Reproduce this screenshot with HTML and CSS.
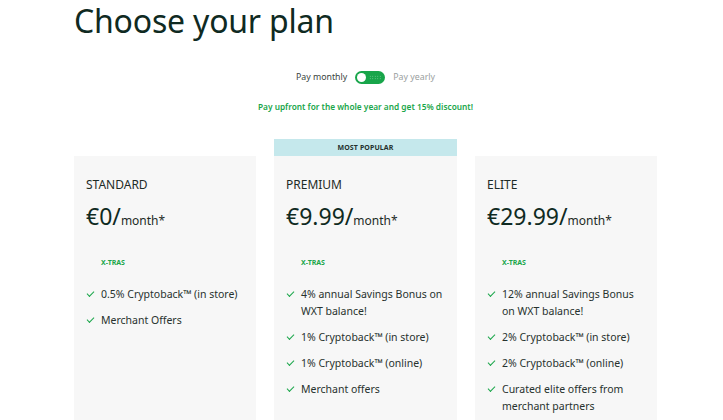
FILE: index.html
```html
<!DOCTYPE html>
<html>
<head>
<meta charset="utf-8">
<link rel="stylesheet" href="styles.css">
</head>
<body>
<div class="page">
  <h1 class="title">Choose your plan</h1>
  <div class="toggle-row">
    <span class="pay active">Pay monthly</span>
    <span class="switch"><span class="knob"></span><span class="dots"></span></span>
    <span class="pay">Pay yearly</span>
  </div>
  <p class="discount">Pay upfront for the whole year and get 15% discount!</p>
  <div class="plans">
    <div class="plan">
      <div class="banner empty"></div>
      <div class="card">
        <div class="name">STANDARD</div>
        <div class="price"><span class="amount">€0/</span><span class="per">month*</span></div>
        <div class="xtras">X-TRAS</div>
        <ul class="list">
          <li>0.5% Cryptoback™ (in store)</li>
          <li>Merchant Offers</li>
        </ul>
      </div>
    </div>
    <div class="plan">
      <div class="banner">MOST POPULAR</div>
      <div class="card">
        <div class="name">PREMIUM</div>
        <div class="price"><span class="amount">€9.99/</span><span class="per">month*</span></div>
        <div class="xtras">X-TRAS</div>
        <ul class="list">
          <li>4% annual Savings Bonus on WXT balance!</li>
          <li>1% Cryptoback™ (in store)</li>
          <li>1% Cryptoback™ (online)</li>
          <li>Merchant offers</li>
        </ul>
      </div>
    </div>
    <div class="plan">
      <div class="banner empty"></div>
      <div class="card">
        <div class="name">ELITE</div>
        <div class="price"><span class="amount">€29.99/</span><span class="per">month*</span></div>
        <div class="xtras">X-TRAS</div>
        <ul class="list">
          <li>12% annual Savings Bonus on WXT balance!</li>
          <li>2% Cryptoback™ (in store)</li>
          <li>2% Cryptoback™ (online)</li>
          <li>Curated elite offers from merchant partners</li>
        </ul>
      </div>
    </div>
  </div>
</div>
</body>
</html>
```
FILE: styles.css
```css
* { box-sizing: border-box; }
html, body { margin: 0; padding: 0; background: #fff; }
body { font-family: "Noto Sans", "Open Sans", sans-serif; color: #1d2b26; overflow: hidden; }
.page { width: 723px; height: 420px; padding-left: 74px; overflow: hidden; }
.title {
  margin: 0;
  font-size: 32px;
  font-weight: 400;
  line-height: 42px;
  color: #0f2a22;
  letter-spacing: -0.2px;
}
.toggle-row {
  margin-top: 28px;
  width: 583px;
  display: flex;
  justify-content: center;
  align-items: center;
  gap: 8px;
  height: 14px;
}
.pay { font-size: 8.8px; color: #9aa09e; }
.pay.active { color: #3a4541; }
.switch {
  position: relative;
  width: 30px; height: 13px;
  border-radius: 7px;
  background: #18a54a;
  display: inline-block;
}
.knob {
  position: absolute; left: 2px; top: 2px;
  width: 9px; height: 9px; border-radius: 50%;
  background: #fff;
}
.dots {
  position: absolute; left: 14px; top: 4px;
  width: 12px; height: 5px;
  background-image: radial-gradient(circle, rgba(255,255,255,0.45) 0.6px, transparent 0.8px);
  background-size: 2.5px 2.5px;
}
.discount {
  margin: 17px 0 0;
  width: 583px;
  text-align: center;
  font-size: 8.3px;
  font-weight: 600;
  color: #1aa64a;
  line-height: 12px;
}
.plans {
  margin-top: 26px;
  width: 583px;
  display: grid;
  grid-template-columns: 182px 183px 182px;
  column-gap: 18px;
}
.banner {
  height: 17px;
  background: #c5e8ec;
  font-size: 7px;
  font-weight: 700;
  text-align: center;
  line-height: 17px;
  color: #24302c;
  letter-spacing: 0.1px;
}
.banner.empty { background: transparent; }
.card {
  background: #f7f7f7;
  height: 300px;
  padding: 21px 12px 0;
}
.name { font-size: 12px; color: #1d2b26; line-height: 16px; }
.price { margin-top: 9px; line-height: 28px; }
.amount { font-size: 23px; color: #0f2a22; }
.per { font-size: 12px; color: #1d2b26; }
.xtras {
  margin-top: 23px;
  padding-left: 15px;
  font-size: 7px;
  font-weight: 700;
  color: #1aa64a;
  line-height: 10px;
}
.list { list-style: none; margin: 18px 0 0; padding: 0; }
.list li {
  position: relative;
  padding-left: 15px;
  font-size: 10.5px;
  line-height: 17px;
  color: #27322e;
  margin-bottom: 9px;
}
.list li::before {
  content: "";
  position: absolute;
  left: 1px; top: 5px;
  width: 6px; height: 3px;
  border-left: 1.5px solid #1aa64a;
  border-bottom: 1.5px solid #1aa64a;
  transform: rotate(-45deg);
}
```
